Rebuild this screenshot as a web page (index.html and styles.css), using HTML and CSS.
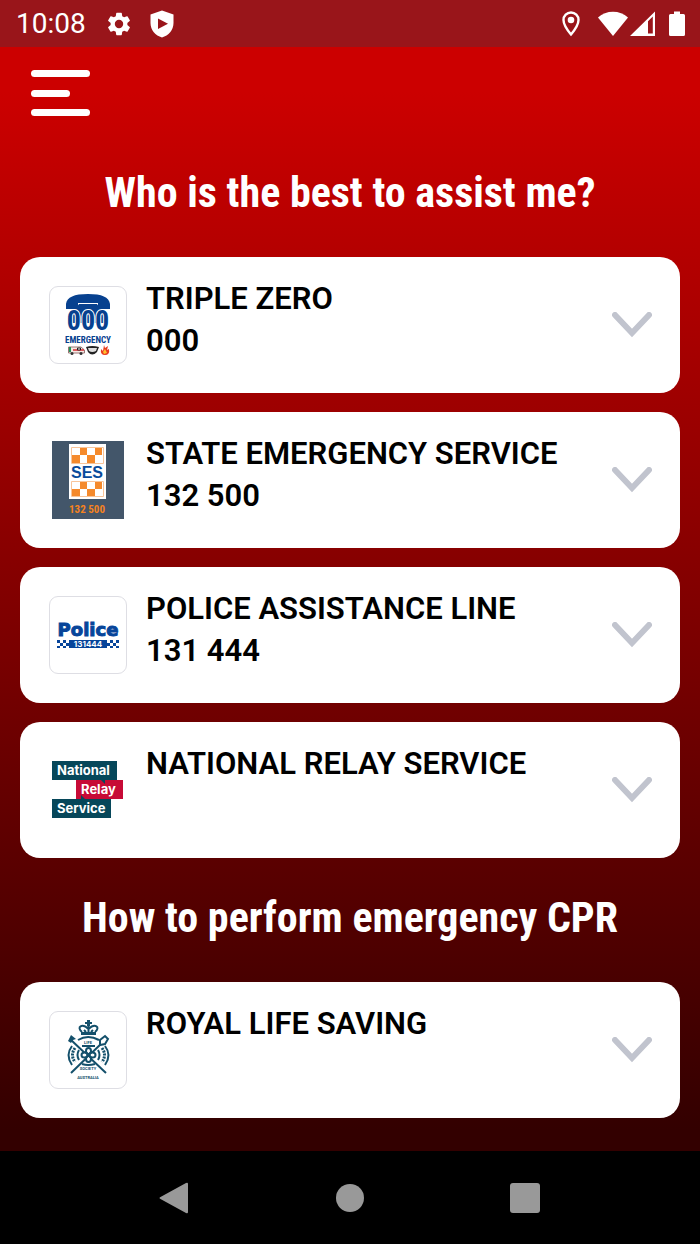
FILE: index.html
```html
<!DOCTYPE html>
<html lang="en">
<head>
  <meta charset="UTF-8">
  <meta name="viewport" content="width=device-width, initial-scale=1.0">
  <title>Emergency Contacts</title>
  <link rel="stylesheet" href="styles.css">
</head>
<body>
  <!-- Status Bar -->
  <header class="status-bar">
    <div class="status-left">
      <span class="clock">10:08</span>
      <svg width="28" height="28" viewBox="0 0 24 24" fill="#fff" aria-hidden="true">
        <path d="M19.14 12.94c.04-.3.06-.61.06-.94s-.02-.64-.07-.94l2.03-1.58c.18-.14.23-.41.12-.61l-1.92-3.32c-.12-.22-.37-.29-.59-.22l-2.39.96c-.5-.38-1.03-.7-1.62-.94l-.36-2.54c-.04-.24-.24-.41-.48-.41h-3.84c-.24 0-.43.17-.47.41l-.36 2.54c-.59.24-1.13.57-1.62.94l-2.39-.96c-.22-.08-.47 0-.59.22L2.74 8.87c-.12.21-.08.47.12.61l2.03 1.58c-.05.3-.09.63-.09.94s.02.64.07.94l-2.03 1.58c-.18.14-.23.41-.12.61l1.92 3.32c.12.22.37.29.59.22l2.39-.96c.5.38 1.03.7 1.62.94l.36 2.54c.05.24.24.41.48.41h3.84c.24 0 .44-.17.47-.41l.36-2.54c.59-.24 1.13-.56 1.62-.94l2.39.96c.22.08.47 0 .59-.22l1.92-3.32c.12-.22.07-.47-.12-.61l-2.01-1.58zM12 15.6a3.6 3.6 0 1 1 0-7.2 3.6 3.6 0 0 1 0 7.2z"/>
      </svg>
      <svg width="24" height="28" viewBox="0 0 24 28" fill="#fff" aria-hidden="true">
        <path fill-rule="evenodd" d="M12 0.500L23.500 4.500V13C23.500 20 18.500 25.500 12 27.500C5.500 25.500 0.500 20 0.500 13V4.500ZM8 8.500V19L18 13.700Z"/>
      </svg>
    </div>
    <div class="status-right">
      <svg width="18" height="26" viewBox="0 0 18 26" aria-hidden="true">
        <path d="M9 1.500C4.800 1.500 1.500 4.800 1.500 9C1.500 14.500 9 23.500 9 23.500C9 23.500 16.500 14.500 16.500 9C16.500 4.800 13.200 1.500 9 1.500Z" fill="none" stroke="#fff" stroke-width="2.400"/>
        <circle cx="9" cy="9" r="3.300" fill="#fff"/>
      </svg>
      <svg width="30" height="26" viewBox="0 0 30 26" fill="#fff" aria-hidden="true">
        <path d="M15 25L0 6.500C8-1.200 22-1.200 30 6.500Z"/>
      </svg>
      <svg width="26" height="26" viewBox="0 0 26 26" aria-hidden="true">
        <path fill-rule="evenodd" fill="#fff" d="M0 25L25 0.500V25ZM18 10.200L22.800 5.500V22.500H18Z"/>
      </svg>
      <svg class="battery" width="16" height="26" viewBox="0 0 16 26" fill="#fff" aria-hidden="true">
        <path d="M5 0.500H11V3H14.500Q16 3 16 4.500V23.500Q16 25 14.500 25H1.500Q0 25 0 23.500V4.500Q0 3 1.500 3H5Z"/>
      </svg>
    </div>
  </header>

  <main class="screen">
    <button class="menu-btn" aria-label="Open menu">
      <span class="bar"></span>
      <span class="bar bar-short"></span>
      <span class="bar"></span>
    </button>

    <h2 class="section-title">Who is the best to assist me?</h2>

    <div class="card-list">
      <button class="card">
        <span class="logo logo-framed">
          <svg width="76" height="76" viewBox="0 0 76 76" aria-hidden="true">
            <path fill="#07418f" d="M16 22V17C17 10 24 7 38 7C52 7 59 10 60 17V22H48V16H28V22Z"/>
            <path fill="#07418f" d="M29 17H47L50 21L58 27V36H18V27L26 21Z"/>
            <text class="logo-zero" x="38" y="43" text-anchor="middle">000</text>
            <text class="logo-emergency" x="38" y="56" text-anchor="middle">EMERGENCY</text>
            <path fill="#f4e9e5" stroke="#9a7775" d="M18.500 60H31L34.500 63V66H18.500Z"/>
            <path stroke="#d62b31" stroke-width="1.500" d="M23 63H34"/>
            <path stroke="#21945a" stroke-width="2" d="M20 60V65"/>
            <path fill="#fff" stroke="#222" d="M27.500 61H30.500V63H27.500Z"/>
            <circle cx="22" cy="66.500" r="1.500" fill="#333"/>
            <circle cx="31" cy="66.500" r="1.500" fill="#333"/>
            <path fill="#222" d="M36 60Q42 58 49 60L47 65Q42 70 38 65Z"/>
            <path fill="#ddd" d="M38 61H47L46 64Q42 66 39 64Z"/>
            <path fill="#e83b20" d="M54 58L55 61L58 59L57 63L59 62Q60 68 55 68Q50 68 51 62L53 64Z"/>
            <path fill="#ffc22d" d="M55 62L57 66L54 67L53 65Z"/>
          </svg>
        </span>
        <span class="card-text">
          <span>TRIPLE ZERO</span>
          <span>000</span>
        </span>
        <svg class="chevron" width="40" height="26" viewBox="0 0 40 26" aria-hidden="true">
          <path d="M3 3L20 21L37 3"/>
        </svg>
      </button>

      <button class="card">
        <span class="logo">
          <svg width="78" height="78" viewBox="0 0 78 78" aria-hidden="true">
            <rect x="3" y="0" width="72" height="78" fill="#43566a"/>
            <rect x="20" y="3" width="37" height="55" fill="#fff"/>
            <path fill="#f58a2c" d="M31 7h7v7h-7zM46 7h7v7h-7zM23 14h8v8h-8zM38 14h8v8h-8zM31 41h7v7h-7zM46 41h7v7h-7zM23 48h8v7h-8zM38 48h8v7h-8z"/>
            <path fill="none" stroke="#f9c59a" d="M22.500 6.500H54.500V22.500H22.500ZM22.500 40.500H54.500V55.500H22.500Z"/>
            <text class="logo-ses" x="38" y="37" text-anchor="middle">SES</text>
            <text class="logo-number" x="38" y="72" text-anchor="middle">132 500</text>
          </svg>
        </span>
        <span class="card-text">
          <span>STATE EMERGENCY SERVICE</span>
          <span>132 500</span>
        </span>
        <svg class="chevron" width="40" height="26" viewBox="0 0 40 26" aria-hidden="true">
          <path d="M3 3L20 21L37 3"/>
        </svg>
      </button>

      <button class="card">
        <span class="logo logo-framed">
          <svg width="76" height="76" viewBox="0 0 76 76" aria-hidden="true">
            <text class="logo-police" x="38" y="39" text-anchor="middle">Police</text>
            <rect x="19" y="43" width="38" height="8" fill="#07459a"/>
            <path fill="#07459a" d="M7 43h3v3h-3zM13 43h3v3h-3zM10 46h3v3h-3zM16 46h3v3h-3zM7 49h3v2h-3zM13 49h3v2h-3zM60 43h3v3h-3zM66 43h3v3h-3zM57 46h3v3h-3zM63 46h3v3h-3zM60 49h3v2h-3zM66 49h3v2h-3z"/>
            <text class="logo-line" x="38" y="50" text-anchor="middle">131444</text>
          </svg>
        </span>
        <span class="card-text">
          <span>POLICE ASSISTANCE LINE</span>
          <span>131 444</span>
        </span>
        <svg class="chevron" width="40" height="26" viewBox="0 0 40 26" aria-hidden="true">
          <path d="M3 3L20 21L37 3"/>
        </svg>
      </button>

      <button class="card">
        <span class="logo">
          <svg width="78" height="78" viewBox="0 0 78 78" aria-hidden="true">
            <path fill="#06475a" d="M3 10H68V29H3ZM3 48H62V67H3Z"/>
            <path fill="#c70a36" d="M27 29H74V48H27Z"/>
            <path fill="#06475a" d="M51 28H56V33ZM32 49V44L37 49Z"/>
            <text class="logo-relay" x="8" y="24">National</text>
            <text class="logo-relay" x="32" y="43">Relay</text>
            <text class="logo-relay" x="8" y="62">Service</text>
          </svg>
        </span>
        <span class="card-text">
          <span>NATIONAL RELAY SERVICE</span>
        </span>
        <svg class="chevron" width="40" height="26" viewBox="0 0 40 26" aria-hidden="true">
          <path d="M3 3L20 21L37 3"/>
        </svg>
      </button>
    </div>

    <h2 class="section-title">How to perform emergency CPR</h2>

    <div class="card-list">
      <button class="card">
        <span class="logo logo-framed">
          <svg width="76" height="76" viewBox="0 0 76 76" fill="none" stroke="#14506b" aria-hidden="true">
            <!-- crown -->
            <path fill="#14506b" stroke="none" d="M37 8H40V10H42V12H40V14H37V12H35V10H37ZM31 20H46V23H31Z"/>
            <path stroke-width="2" d="M32 20C26 15 32 11 38.500 17C45 11 51 15 45 20M38.500 14V20M34 18L36 20M43 18L41 20"/>
            <!-- rings -->
            <path stroke-width="2" d="M28 28Q38 22 49 28M22 34Q15 43 22 53M55 34Q62 43 55 53"/>
            <path stroke-width="3" stroke-dasharray="2 1" d="M25 36Q20 43 25 50M52 36Q57 43 52 50"/>
            <path stroke-width="2" d="M32 34H45M32 52Q38 54 45 52M29 38Q26 43 29 48M48 38Q51 43 48 48"/>
            <!-- crossed oar and hook -->
            <path stroke-width="2" d="M20 27L56 61M54 29L21 61"/>
            <path fill="#14506b" stroke="none" d="M18 29L21 23L26 27L23 28L21 31Z"/>
            <path fill="#fff" stroke-width="2" d="M50 33L50 28L55 24L58 27L55 32Z"/>
            <!-- centre knot -->
            <g fill="#fff" stroke-width="2">
              <ellipse cx="38.500" cy="39" rx="2.500" ry="3"/>
              <ellipse cx="38.500" cy="47" rx="2.500" ry="3"/>
              <ellipse cx="34.500" cy="43" rx="3" ry="2.500"/>
              <ellipse cx="42.500" cy="43" rx="3" ry="2.500"/>
            </g>
            <path stroke-width="2" d="M35 39.500L42 46.500M42 39.500L35 46.500"/>
            <text class="logo-crest" x="38" y="32" text-anchor="middle">LIFE</text>
            <text class="logo-crest" x="38" y="58" text-anchor="middle">SOCIETY</text>
            <text class="logo-crest" x="38" y="67" text-anchor="middle">AUSTRALIA</text>
          </svg>
        </span>
        <span class="card-text">
          <span>ROYAL LIFE SAVING</span>
        </span>
        <svg class="chevron" width="40" height="26" viewBox="0 0 40 26" aria-hidden="true">
          <path d="M3 3L20 21L37 3"/>
        </svg>
      </button>
    </div>
  </main>

  <!-- System Navigation -->
  <nav class="nav-bar">
    <button class="nav-btn" aria-label="Back">
      <svg width="32" height="32" viewBox="0 0 32 32"><path d="M1.500 15L27 1Q29 0 29 2V30Q29 32 27 31L1.500 17Q-0.500 16 1.500 15Z"/></svg>
    </button>
    <button class="nav-btn" aria-label="Home">
      <svg width="32" height="32" viewBox="0 0 32 32"><circle cx="16" cy="16" r="14"/></svg>
    </button>
    <button class="nav-btn" aria-label="Recent apps">
      <svg width="32" height="32" viewBox="0 0 32 32"><rect x="1" y="1" width="30" height="30" rx="3"/></svg>
    </button>
  </nav>
</body>
</html>
```

FILE: styles.css
```css
* {
  box-sizing: border-box;
}

body {
  margin: 0;
  min-height: 100vh;
  display: flex;
  flex-direction: column;
  font-family: Roboto, sans-serif;
  background-color: #000;
}

button {
  border: none;
  padding: 0;
  background: none;
  font-family: inherit;
  cursor: pointer;
}

svg {
  display: block;
  flex-shrink: 0;
}

/* Status Bar */
.status-bar {
  display: flex;
  justify-content: space-between;
  align-items: center;
  height: 47px;
  padding: 0 15px 0 16px;
  background-color: #99151a;
  color: #fff;
}

.status-left {
  display: flex;
  align-items: center;
  gap: 17px;
}

.status-right {
  display: flex;
  align-items: center;
  gap: 2px;
}

.status-right svg:first-child {
  margin-right: 16px;
}

.battery {
  margin-left: 11px;
}

.clock {
  font-size: 28px;
  line-height: 32px;
  margin-right: 2px;
}

/* Main Screen */
.screen {
  flex: 1;
  padding: 23px 20px 33px;
  background: linear-gradient(#cc0000 4%, #330000 98%);
}

.menu-btn {
  display: flex;
  flex-direction: column;
  justify-content: space-between;
  width: 59px;
  height: 46px;
  margin-left: 11px;
}

.bar {
  width: 100%;
  height: 7px;
  border-radius: 4px;
  background-color: #fff;
}

.bar-short {
  width: 39px;
}

.section-title {
  margin: 48px 0 35px;
  color: #fff;
  font-family: "Roboto Condensed", Roboto, sans-serif;
  font-size: 42px;
  font-weight: 700;
  line-height: 58px;
  text-align: center;
}

.card-list + .section-title {
  margin-top: 31px;
}

/* Cards */
.card-list {
  display: flex;
  flex-direction: column;
  gap: 19px;
}

.card {
  display: flex;
  align-items: center;
  min-height: 136px;
  padding: 21px 28px 21px 29px;
  border-radius: 20px;
  background-color: #fff;
  color: #000;
  text-align: left;
}

.logo {
  display: flex;
  flex-shrink: 0;
  width: 78px;
  height: 78px;
}

.logo-framed {
  border: 1px solid #dedee4;
  border-radius: 9px;
}

.card-text {
  display: flex;
  flex: 1;
  flex-direction: column;
  align-self: flex-start;
  margin-left: 19px;
  font-size: 31px;
  font-weight: 600;
  line-height: 42px;
}

.chevron {
  fill: none;
  stroke: #c1c4ce;
  stroke-width: 6;
  stroke-linecap: round;
}

/* Logo lettering */
.logo-zero,
.logo-emergency {
  fill: #07418f;
  font-family: "Roboto Condensed", Roboto, sans-serif;
  font-weight: 700;
}

.logo-zero {
  font-size: 28px;
  stroke: #fff;
  stroke-width: 2;
  paint-order: stroke;
}

.logo-emergency {
  font-size: 9px;
}

.logo-ses {
  fill: #084b9c;
  font: 700 16px "Liberation Sans", sans-serif;
}

.logo-number {
  fill: #f58220;
  font: 700 11px "Roboto Condensed", Roboto, sans-serif;
}

.logo-police {
  fill: #07459a;
  stroke: #07459a;
  stroke-width: 1;
  font: 700 18px "DejaVu Sans", sans-serif;
}

.logo-line {
  fill: #fff;
  font: 700 8px Inter, sans-serif;
}

.logo-relay {
  fill: #fff;
  font: 700 13px Inter, sans-serif;
}

.logo-crest {
  fill: #14506b;
  stroke: none;
  font: 700 4px Roboto, sans-serif;
}

/* System Navigation */
.nav-bar {
  display: flex;
  justify-content: center;
  align-items: center;
  gap: 143px;
  height: 93px;
  background-color: #000;
}

.nav-btn svg {
  fill: #999;
}
```
